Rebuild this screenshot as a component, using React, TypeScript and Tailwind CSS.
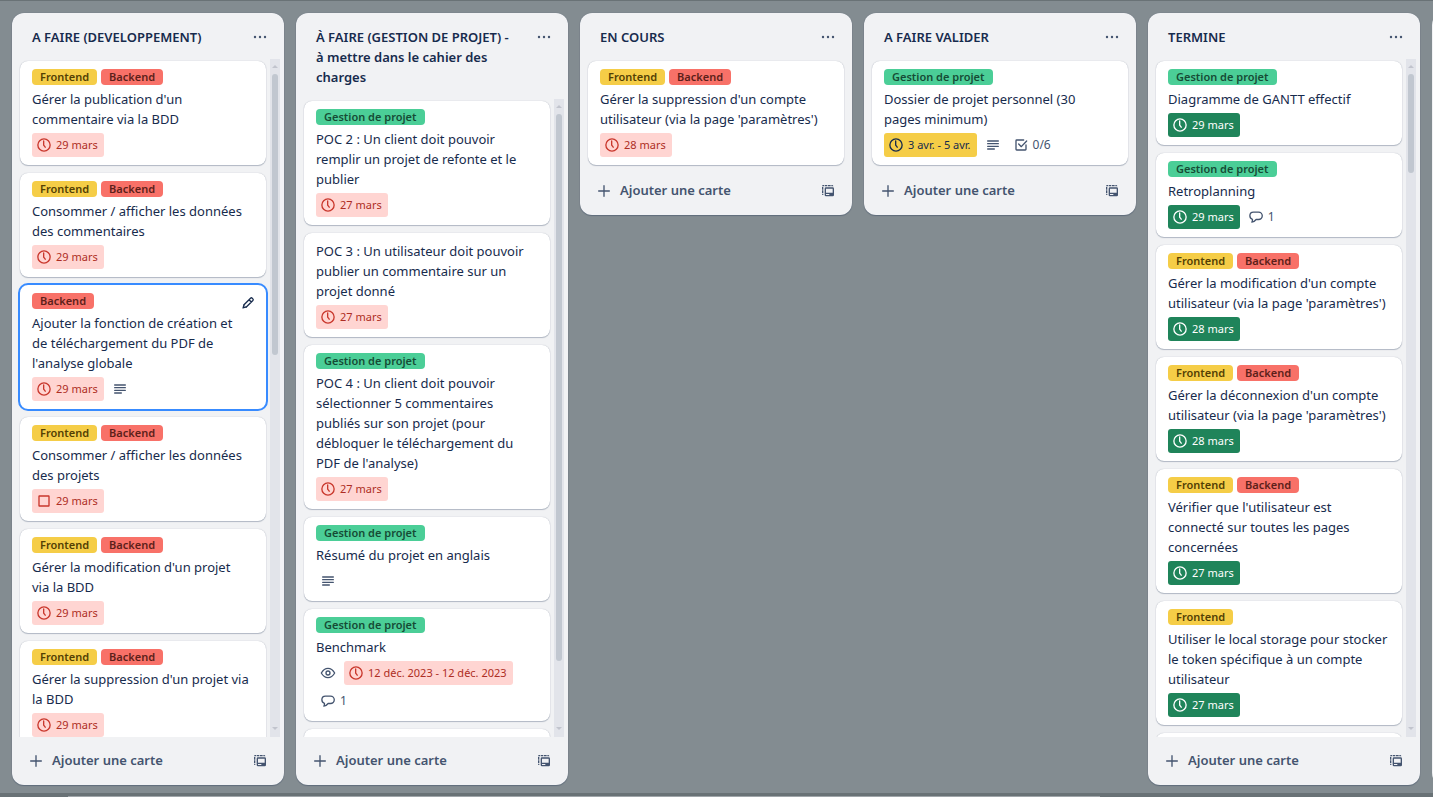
import React from "react";

type LabelKind = "Frontend" | "Backend" | "Gestion de projet";
type DueTone = "late" | "soon" | "done";
type Due = { text: string; tone: DueTone; boxed?: boolean };
type CardData = {
  labels?: LabelKind[];
  title: string;
  due?: Due;
  watching?: boolean;
  description?: boolean;
  comments?: number;
  checklist?: string;
  focused?: boolean;
};
type ListData = { title: string; cards: CardData[]; thumb?: number };

const FB: LabelKind[] = ["Frontend", "Backend"];
const GP: LabelKind[] = ["Gestion de projet"];
const late = (text: string, boxed = false): Due => ({ text, tone: "late", boxed });
const done = (text: string): Due => ({ text, tone: "done" });

const lists: ListData[] = [
  {
    title: "A FAIRE (DEVELOPPEMENT)",
    thumb: 43.4,
    cards: [
      { labels: FB, title: "Gérer la publication d'un commentaire via la BDD", due: late("29 mars") },
      { labels: FB, title: "Consommer / afficher les données des commentaires", due: late("29 mars") },
      {
        labels: ["Backend"],
        title: "Ajouter la fonction de création et\nde téléchargement du PDF de\nl'analyse globale",
        due: late("29 mars"),
        description: true,
        focused: true,
      },
      { labels: FB, title: "Consommer / afficher les données des projets", due: late("29 mars", true) },
      { labels: FB, title: "Gérer la modification d'un projet\nvia la BDD", due: late("29 mars") },
      { labels: FB, title: "Gérer la suppression d'un projet via la BDD", due: late("29 mars") },
    ],
  },
  {
    title: "À FAIRE (GESTION DE PROJET) -\nà mettre dans le cahier des\ncharges",
    thumb: 90,
    cards: [
      { labels: GP, title: "POC 2 : Un client doit pouvoir remplir un projet de refonte et le publier", due: late("27 mars") },
      { title: "POC 3 : Un utilisateur doit pouvoir publier un commentaire sur un projet donné", due: late("27 mars") },
      {
        labels: GP,
        title:
          "POC 4 : Un client doit pouvoir sélectionner 5 commentaires publiés sur son projet (pour débloquer le téléchargement du PDF de l'analyse)",
        due: late("27 mars"),
      },
      { labels: GP, title: "Résumé du projet en anglais", description: true },
      { labels: GP, title: "Benchmark", watching: true, due: late("12 déc. 2023 - 12 déc. 2023"), comments: 1 },
      { title: "" },
    ],
  },
  {
    title: "EN COURS",
    cards: [
      { labels: FB, title: "Gérer la suppression d'un compte utilisateur (via la page 'paramètres')", due: late("28 mars") },
    ],
  },
  {
    title: "A FAIRE VALIDER",
    cards: [
      {
        labels: GP,
        title: "Dossier de projet personnel (30\npages minimum)",
        due: { text: "3 avr. - 5 avr.", tone: "soon" },
        description: true,
        checklist: "0/6",
      },
    ],
  },
  {
    title: "TERMINE",
    thumb: 15.3,
    cards: [
      { labels: GP, title: "Diagramme de GANTT effectif", due: done("29 mars") },
      { labels: GP, title: "Retroplanning", due: done("29 mars"), comments: 1 },
      { labels: FB, title: "Gérer la modification d'un compte utilisateur (via la page 'paramètres')", due: done("28 mars") },
      { labels: FB, title: "Gérer la déconnexion d'un compte utilisateur (via la page 'paramètres')", due: done("28 mars") },
      { labels: FB, title: "Vérifier que l'utilisateur est connecté sur toutes les pages concernées", due: done("27 mars") },
      { labels: ["Frontend"], title: "Utiliser le local storage pour stocker le token spécifique à un compte utilisateur", due: done("27 mars") },
      { title: "" },
    ],
  },
];

const labelStyles: Record<LabelKind, string> = {
  Frontend: "bg-[#f5cd47] text-[#533f04]",
  Backend: "bg-[#f87168] text-[#5d1f1a]",
  "Gestion de projet": "bg-[#4bce97] text-[#164b35]",
};

const dueStyles: Record<DueTone, string> = {
  late: "bg-[#ffd5d2] text-[#ae2e24]",
  soon: "bg-[#f5cd47] text-[#172b4d]",
  done: "bg-[#1f845a] text-white",
};

const dueIconStyles: Record<DueTone, string> = {
  late: "text-[#c9372c]",
  soon: "text-[#172b4d]",
  done: "text-white",
};

function Icon({ children, className = "" }: { children: React.ReactNode; className?: string }) {
  return (
    <svg viewBox="0 0 24 24" fill="none" aria-hidden="true" className={`size-4 shrink-0 ${className}`}>
      {children}
    </svg>
  );
}

const ClockIcon = ({ className }: { className?: string }) => (
  <Icon className={className}>
    <circle cx="12" cy="12" r="9.2" stroke="currentColor" strokeWidth="2" />
    <path d="M11.5 6v6.3l2.3 3" stroke="currentColor" strokeWidth="2" strokeLinecap="round" strokeLinejoin="round" />
  </Icon>
);

const BoxIcon = ({ className }: { className?: string }) => (
  <Icon className={className}>
    <rect x="4.5" y="4.5" width="15" height="15" rx="0.5" stroke="currentColor" strokeWidth="2" />
  </Icon>
);

const DescriptionIcon = () => (
  <Icon>
    <path
      fill="currentColor"
      d="M4 5a1 1 0 0 0 0 2h16a1 1 0 1 0 0-2H4Zm0 4a1 1 0 0 0 0 2h16a1 1 0 1 0 0-2H4Zm-1 5a1 1 0 0 1 1-1h16a1 1 0 1 1 0 2H4a1 1 0 0 1-1-1Zm1 3a1 1 0 1 0 0 2h10a1 1 0 1 0 0-2H4Z"
    />
  </Icon>
);

const CommentIcon = () => (
  <Icon>
    <path
      d="M8.2 4.6h7.6a5.6 5.6 0 0 1 0 11.2h-3.6c-1.6 1.9-3.7 3.5-6.4 4 .7-1.4 1-2.8.9-4.3-2.2-.6-3.9-2.4-3.9-5.2 0-3.3 2.4-5.7 5.4-5.7Z"
      stroke="currentColor"
      strokeWidth="2"
      strokeLinejoin="round"
    />
  </Icon>
);

const EyeIcon = () => (
  <Icon>
    <path d="M2 12C4.4 7.8 7.8 5 12 5s7.6 2.8 10 7c-2.4 4.2-5.8 7-10 7S4.4 16.2 2 12Z" stroke="currentColor" strokeWidth="2" strokeLinejoin="round" />
    <circle cx="12" cy="12" r="3" stroke="currentColor" strokeWidth="2" />
  </Icon>
);

const ChecklistIcon = () => (
  <Icon>
    <path d="M16 4.5H5.5a1 1 0 0 0-1 1v13a1 1 0 0 0 1 1h13a1 1 0 0 0 1-1V12" stroke="currentColor" strokeWidth="2" strokeLinecap="round" />
    <path d="m8.5 10.5 4 4 8-8.5" stroke="currentColor" strokeWidth="2" strokeLinecap="round" strokeLinejoin="round" />
  </Icon>
);

const PencilIcon = () => (
  <Icon>
    <path
      d="m6 14.5 9.8-9.7a1.8 1.8 0 0 1 2.5 0l1 1a1.8 1.8 0 0 1 0 2.500L9.500 18M13.500 7l3.500 3.500"
      stroke="currentColor"
      strokeWidth="2"
      strokeLinejoin="round"
      strokeLinecap="round"
    />
    <path d="m5.2 13.8 5 5L4.5 20.3a.7.7 0 0 1-.9-.9zM6.8 15.8l-.5 1.9 1.9-.5z" fill="currentColor" fillRule="evenodd" />
  </Icon>
);

const PlusIcon = () => (
  <Icon>
    <path d="M12 4v16M4 12h16" stroke="currentColor" strokeWidth="2" strokeLinecap="round" />
  </Icon>
);

const DotsIcon = () => (
  <Icon>
    <circle cx="4.5" cy="12" r="1.8" fill="currentColor" />
    <circle cx="12" cy="12" r="1.8" fill="currentColor" />
    <circle cx="19.5" cy="12" r="1.8" fill="currentColor" />
  </Icon>
);

const TemplateIcon = () => (
  <Icon>
    <path
      d="M3 5a2 2 0 0 1 2-2h1v2H3zM7 3h4v2H7zM12 3h4v2h-4zM17 3h1a2 2 0 0 1 2 2h-3zM3 6h2v4H3zM3 11h2v4H3zM3 16h2v2H4a1 1 0 0 1-1-1z"
      fill="currentColor"
    />
    <path
      d="M9 6.5h10a2 2 0 0 1 2 2V18a2 2 0 0 1-2 2H9a2 2 0 0 1-2-2V8.500a2 2 0 0 1 2-2Zm0 2v6h10v-6Zm0 8v1.500h5v-1.500Z"
      fill="currentColor"
      fillRule="evenodd"
    />
  </Icon>
);

function Badge({ icon, text, name }: { icon: React.ReactNode; text?: string | number; name: string }) {
  return (
    <span title={name} className="flex h-6 items-center gap-1 px-1 text-xs text-[#44546f]">
      {icon}
      {text !== undefined && <span>{text}</span>}
    </span>
  );
}

function Card({ card }: { card: CardData }) {
  const hasBadges = card.due || card.description || card.comments || card.checklist || card.watching;
  return (
    <li
      className={`relative min-h-9 shrink-0 rounded-lg bg-white px-3 py-2 ${
        card.focused
          ? "outline-2 outline-[#388bff]"
          : "shadow-[0_1px_1px_#091e4240,0_0_1px_#091e424f]"
      }`}
    >
      {card.labels && (
        <div className="mb-1 flex gap-1">
          {card.labels.map((l) => (
            <span key={l} className={`h-4 rounded px-2 text-[11px] leading-4 font-semibold ${labelStyles[l]}`}>
              {l}
            </span>
          ))}
        </div>
      )}
      {card.title && (
        <a href="#" className="block text-[13px] leading-5 whitespace-pre-line text-[#172b4d]">
          {card.title}
        </a>
      )}
      {hasBadges && (
        <div className="mt-1 flex flex-wrap gap-1">
          {card.watching && <Badge name="Vous suivez cette carte" icon={<EyeIcon />} />}
          {card.due && (
            <span className={`flex h-6 items-center gap-1 rounded-[3px] pr-[6px] pl-1 text-[11px] ${dueStyles[card.due.tone]}`}>
              {card.due.boxed ? (
                <BoxIcon className={dueIconStyles[card.due.tone]} />
              ) : (
                <ClockIcon className={dueIconStyles[card.due.tone]} />
              )}
              <span>{card.due.text}</span>
            </span>
          )}
          {card.description && <Badge name="Description" icon={<DescriptionIcon />} />}
          {card.comments && <Badge name="Commentaires" icon={<CommentIcon />} text={card.comments} />}
          {card.checklist && <Badge name="Checklist" icon={<ChecklistIcon />} text={card.checklist} />}
        </div>
      )}
      {card.focused && (
        <button type="button" aria-label="Modifier la carte" className="absolute top-[10px] right-[10px] text-[#172b4d]">
          <PencilIcon />
        </button>
      )}
    </li>
  );
}

function ScrollTrack({ thumb }: { thumb: number }) {
  return (
    <div aria-hidden="true" className="flex w-[10px] shrink-0 flex-col items-center bg-[#e2e4ea]">
      <svg viewBox="0 0 10 15" className="h-[15px] w-[10px] shrink-0">
        <path d="M2 9l3-3 3 3z" fill="#c1c4cd" />
      </svg>
      <div className="min-h-0 w-full grow px-[2px]">
        <div className="w-full rounded-[3px] bg-[#c1c7d0]" style={{ height: `${thumb}%` }} />
      </div>
      <svg viewBox="0 0 10 15" className="h-[15px] w-[10px] shrink-0">
        <path d="M2 5h6L5 8z" fill="#c1c4cd" />
      </svg>
    </div>
  );
}

function List({ list }: { list: ListData }) {
  return (
    <section className="flex max-h-full w-[272px] shrink-0 flex-col rounded-xl bg-[#f1f2f4] shadow-[0_1px_1px_#091e4240,0_0_1px_#091e424f]">
      <header className="flex items-start justify-between pt-2 pr-2 pl-5">
        <h2 className="w-[208px] pt-[6px] pb-3 text-[13px] leading-5 font-semibold whitespace-pre-line text-[#172b4d]">
          {list.title}
        </h2>
        <button type="button" aria-label="Actions de la liste" className="flex size-8 items-center justify-center text-[#44546f]">
          <DotsIcon />
        </button>
      </header>
      <div className="flex min-h-0 pr-1">
        <ol className="flex min-w-0 grow flex-col gap-2 overflow-hidden py-[2px] pr-1 pl-2">
          {list.cards.map((card, i) => (
            <Card key={i} card={card} />
          ))}
        </ol>
        {list.thumb && <ScrollTrack thumb={list.thumb} />}
      </div>
      <footer className="flex items-center justify-between p-2">
        <button type="button" className="flex h-8 items-center gap-2 pl-2 text-[13px] font-semibold text-[#44546f]">
          <PlusIcon />
          Ajouter une carte
        </button>
        <button type="button" aria-label="Créer à partir d'un modèle" className="flex size-8 items-center justify-center text-[#44546f]">
          <TemplateIcon />
        </button>
      </footer>
    </section>
  );
}

export default function App() {
  return (
    <div className="flex h-screen flex-col overflow-hidden border-t border-[#697276] bg-[#838c91] font-['Noto_Sans','Open_Sans',sans-serif]">
      <main className="flex min-h-0 grow items-start gap-3 overflow-hidden px-3 pt-3 pb-2">
        {lists.map((list) => (
          <List key={list.title} list={list} />
        ))}
        <section aria-label="Liste suivante" className="h-full w-[272px] shrink-0 rounded-xl bg-[#f1f2f4]" />
      </main>
      <div aria-hidden="true" className="h-1 shrink-0 bg-[#697276] pt-[3px]">
        <div className="ml-17 h-px w-[72%] bg-[#a0a6aa]" />
      </div>
    </div>
  );
}
